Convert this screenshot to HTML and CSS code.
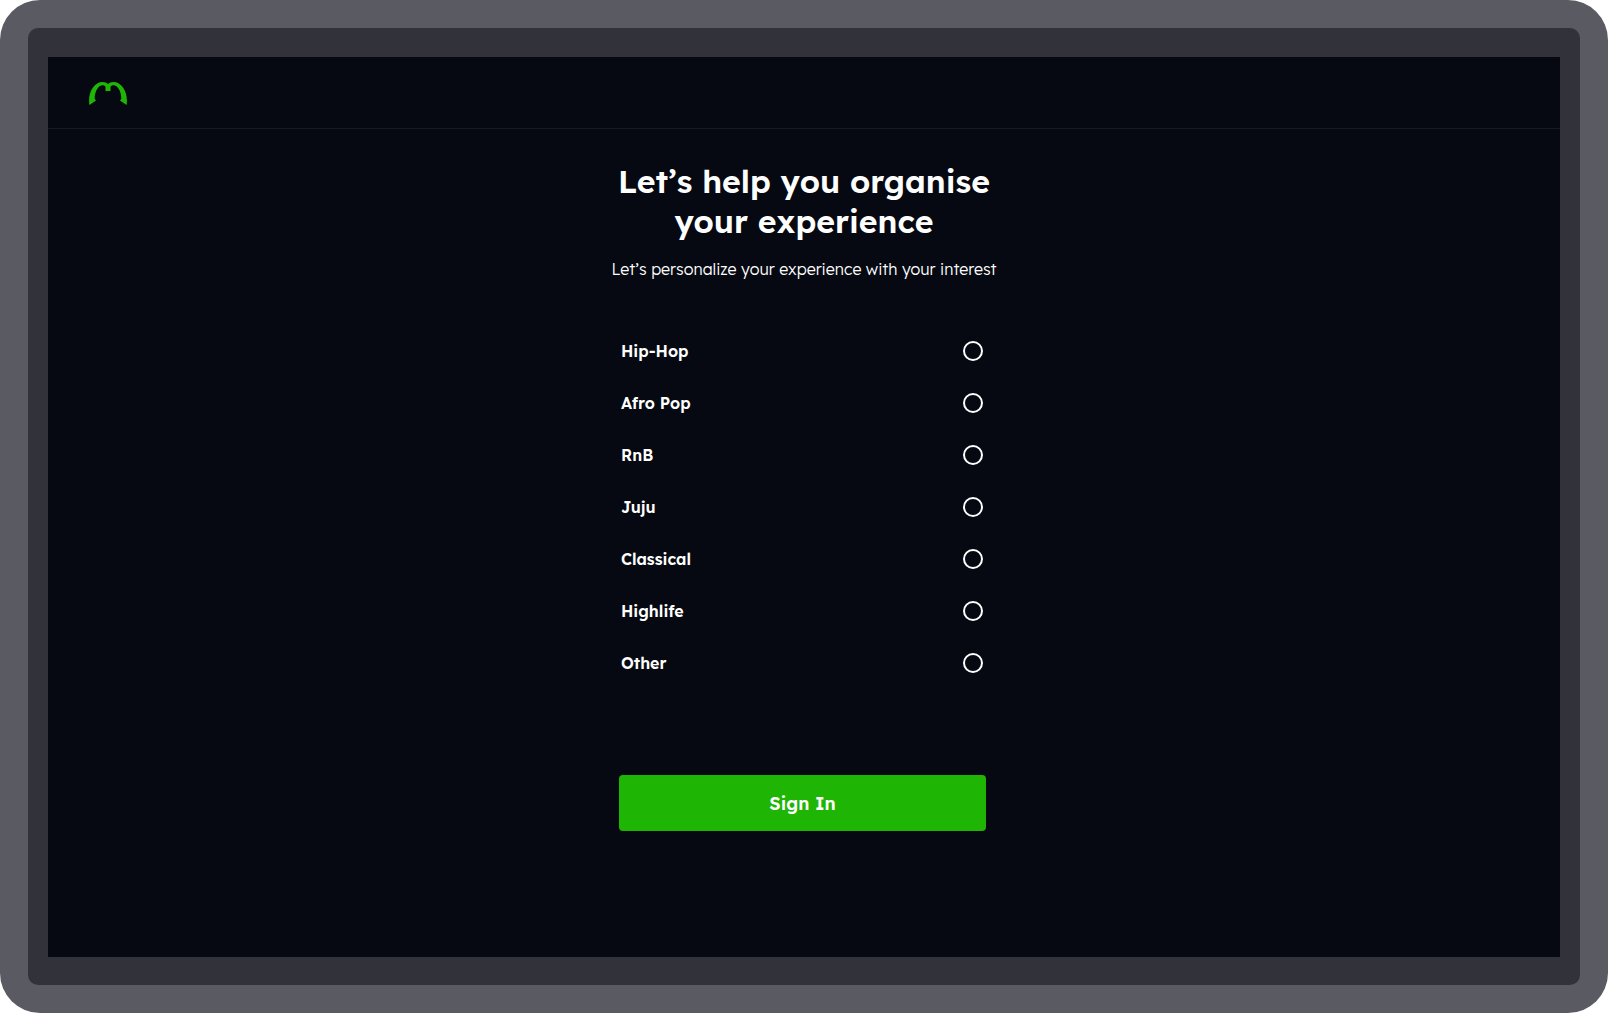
FILE: index.html
```html
<!DOCTYPE html>
<html lang="en">
<head>
<meta charset="utf-8">
<meta name="viewport" content="width=device-width, initial-scale=1">
<title>Organise your experience</title>
<link rel="stylesheet" href="styles.css">
</head>
<body>
<div class="device">
  <div class="bezel">
    <div class="screen">
      <header class="topbar">
        <svg class="logo" viewBox="0 0 38 23" role="img" aria-label="Home">
          <path d="M.4 23C-1.500 10.500 5 0 13.500 0c2.400 0 4.300.7 5.500 2C20.200.7 22.100 0 24.500 0 33 0 39.500 10.500 37.600 23L31 18.500l1.300-1.700C32.300 9 28.500 3.200 24.500 3.200c-1.600 0-2.600.6-3 1.800v4h-5V5c-.4-1.200-1.400-1.800-3-1.800-4 0-7.800 5.800-7.800 13.600L7 18.500z"/>
        </svg>
      </header>
      <main class="content">
        <h1 class="title">Let’s help you organise your experience</h1>
        <p class="subtitle">Let’s personalize your experience with your interest</p>
        <form class="form">
          <div class="options">
            <label class="option">Hip-Hop<input class="radio" type="radio" name="genre" value="hip-hop"></label>
            <label class="option">Afro Pop<input class="radio" type="radio" name="genre" value="afro-pop"></label>
            <label class="option">RnB<input class="radio" type="radio" name="genre" value="rnb"></label>
            <label class="option">Juju<input class="radio" type="radio" name="genre" value="juju"></label>
            <label class="option">Classical<input class="radio" type="radio" name="genre" value="classical"></label>
            <label class="option">Highlife<input class="radio" type="radio" name="genre" value="highlife"></label>
            <label class="option">Other<input class="radio" type="radio" name="genre" value="other"></label>
          </div>
          <button class="submit" type="button">Sign In</button>
        </form>
      </main>
    </div>
  </div>
</div>
</body>
</html>
```
FILE: styles.css
```css
* {
  box-sizing: border-box;
}

body {
  margin: 0;
  background: #fff;
  color: #fff;
  font-family: Lexend, Inter, "Open Sans", sans-serif;
}

.device {
  display: flex;
  min-height: 100vh;
  padding: 28px;
  border-radius: 40px;
  background: #5a5a62;
}

.bezel {
  display: flex;
  flex: 1;
  padding: 29px 20px 28px;
  border-radius: 10px;
  background: #32323a;
}

.screen {
  flex: 1;
  background: #060911;
}

.topbar {
  display: flex;
  align-items: center;
  height: 72px;
  padding: 2px 41px 0;
  border-bottom: 1px solid #161a22;
}

.logo {
  width: 38px;
  height: 23px;
  fill: #1eb505;
}

.content {
  display: flex;
  flex-direction: column;
  align-items: center;
  padding: 32px 20px;
}

.title {
  max-width: 400px;
  margin: 0;
  font-size: 32px;
  font-weight: 600;
  line-height: 40px;
  text-align: center;
}

.subtitle {
  margin: 18px 0 0;
  font-size: 16px;
  font-weight: 300;
  line-height: 20px;
  text-align: center;
}

.form {
  width: 100%;
  max-width: 370px;
  margin-top: 62px;
  padding-right: 3px;
}

.options {
  display: grid;
  gap: 32px;
  padding: 0 3px 0 2px;
}

.option {
  display: flex;
  align-items: center;
  justify-content: space-between;
  font-size: 16px;
  font-weight: 600;
  line-height: 20px;
}

.radio {
  appearance: none;
  width: 20px;
  height: 20px;
  margin: 0;
  border: 2px solid #fff;
  border-radius: 50%;
}

.radio:checked {
  background: radial-gradient(#1eb505 50%, transparent 55%);
}

.submit {
  width: 100%;
  height: 56px;
  margin-top: 102px;
  border: 0;
  border-radius: 4px;
  background: #1eb505;
  color: #fff;
  font-family: inherit;
  font-size: 18px;
  font-weight: 600;
}
```
